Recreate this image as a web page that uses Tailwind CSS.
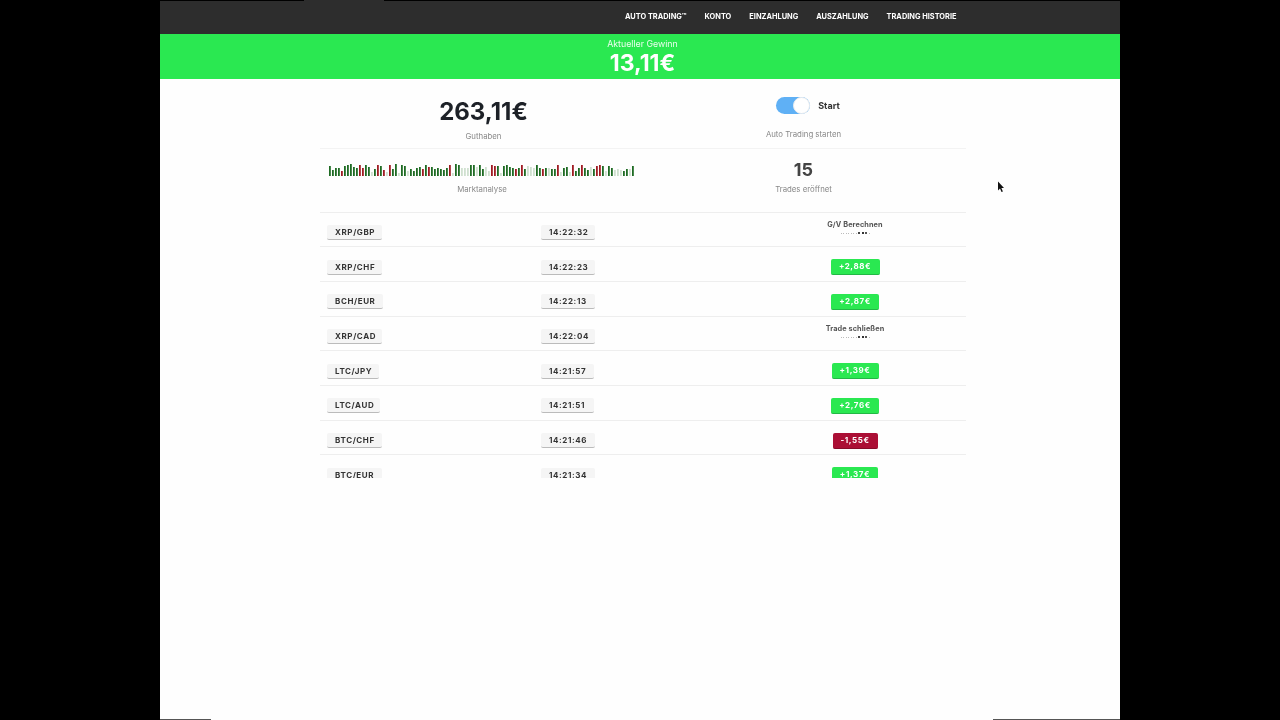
<!DOCTYPE html>
<html lang="en">
<head>
  <meta charset="UTF-8" />
  <title>Auto Trading</title>
  <script src="https://cdn.jsdelivr.net/npm/@tailwindcss/browser@4"></script>
</head>
<body class="bg-black h-[720px] overflow-hidden font-['Inter',sans-serif]">
  <div class="relative mx-auto w-[960px] h-[720px] bg-[#fefefe] overflow-hidden blur-[0.45px]">
    <!-- Edge strips from the screen recording -->
    <div class="absolute top-0 left-0 w-[144px] h-px bg-black"></div>
    <div class="absolute top-0 left-[224px] right-0 h-px bg-black"></div>
    <div class="absolute bottom-0 left-0 w-[51px] h-px bg-[#555]"></div>
    <div class="absolute bottom-0 left-[833px] right-0 h-px bg-[#555]"></div>

    <!-- Nav -->
    <nav class="h-[34px] bg-[#2d2d2d] flex items-center pl-[465px] pb-px gap-[18px] text-[7.4px] leading-[12px] font-bold text-white">
      <a>AUTO TRADING™</a>
      <a>KONTO</a>
      <a>EINZAHLUNG</a>
      <a>AUSZAHLUNG</a>
      <a>TRADING HISTORIE</a>
    </nav>

    <!-- Current profit -->
    <div class="h-[45px] bg-[#2ae851] flex flex-col items-center pl-[5px] pt-[4px] text-white">
      <div class="text-[8.8px] leading-[12px] text-white/90">Aktueller Gewinn</div>
      <div class="text-[23px] leading-[26px] font-bold">13,11€</div>
    </div>

    <div class="w-[646px] ml-[160px]">
      <!-- Stats row 1 -->
      <div class="grid grid-cols-[321px_325px] h-[70px] border-b border-[#f3f3f3]">
        <div class="flex flex-col items-center pl-[6px] pt-[19px]">
          <div class="text-[24px] leading-[28px] font-bold text-[#1d2127]">263,11€</div>
          <div class="mt-1 text-[7.8px] leading-[12px] text-[#888]">Guthaben</div>
        </div>
        <div class="flex flex-col items-center pt-[18px]">
          <div class="flex items-center gap-[8px] pl-[9px]">
            <div class="w-[34px] h-[17px] rounded-full bg-[#5fb0f5] flex justify-end">
              <div class="w-[17px] h-[17px] rounded-full bg-white border border-[#eeeeee]"></div>
            </div>
            <span class="text-[9px] leading-[12px] font-bold text-[#333]">Start</span>
          </div>
          <div class="mt-[14px] text-[7.8px] leading-[12px] text-[#888]">Auto Trading starten</div>
        </div>
      </div>

      <!-- Stats row 2 -->
      <div class="grid grid-cols-[321px_325px] h-[64px] border-b border-[#eeeeee]">
        <div class="flex flex-col items-center pl-[3px] pt-[15px]">
          <svg id="bars" width="306" height="13" class="block"></svg>
          <div class="mt-[6px] text-[7.8px] leading-[12px] text-[#888]">Marktanalyse</div>
        </div>
        <div class="flex flex-col items-center pt-[11px]">
          <div class="text-[18px] leading-[20px] font-bold text-[#444]">15</div>
          <div class="mt-[3px] text-[7.8px] leading-[12px] text-[#888]">Trades eröffnet</div>
        </div>
      </div>

      <!-- Trades -->
      <div class="h-[265px] overflow-hidden text-[8px] font-bold tracking-[0.6px] text-[#333]">
        <div class="grid grid-cols-[214px_214px_214px] items-center h-[34.3px] border-b border-[#eeeeee] pt-[6px]">
          <div><span class="inline-block ml-[7px] w-[55px] h-[15px] leading-[14px] pl-2 bg-[#f5f5f5] border-b border-[#bbb] rounded-[2px]">XRP/GBP</span></div>
          <div><span class="inline-block ml-[7px] w-[54px] h-[15px] leading-[14px] pl-2 bg-[#f5f5f5] border-b border-[#bbb] rounded-[2px]">14:22:32</span></div>
          <div class="flex flex-col items-center text-[7.3px] leading-[10px] tracking-[0.1px] text-[#555] -mt-[11px]">
            <span>G/V Berechnen</span>
            <div class="mt-[2px] flex items-center gap-[1.5px]">
              <i class="w-px h-px bg-[#bbb]"></i><i class="w-px h-px bg-[#bbb]"></i><i class="w-px h-px bg-[#bbb]"></i><i class="w-px h-px bg-[#bbb]"></i><i class="w-px h-px bg-[#bbb]"></i><i class="w-px h-px bg-[#bbb]"></i><i class="w-px h-px bg-[#bbb]"></i><i class="w-[2px] h-[2px] bg-[#444]"></i><i class="w-[2px] h-[2px] bg-[#333]"></i><i class="w-[2px] h-[2px] bg-[#555]"></i><i class="w-px h-px bg-[#bbb]"></i>
            </div>
          </div>
        </div>
        <div class="grid grid-cols-[214px_214px_214px] items-center h-[34.7px] border-b border-[#eeeeee] pt-[6px]">
          <div><span class="inline-block ml-[7px] w-[55px] h-[15px] leading-[14px] pl-2 bg-[#f5f5f5] border-b border-[#bbb] rounded-[2px]">XRP/CHF</span></div>
          <div><span class="inline-block ml-[7px] w-[54px] h-[15px] leading-[14px] pl-2 bg-[#f5f5f5] border-b border-[#bbb] rounded-[2px]">14:22:23</span></div>
          <div class="text-center"><span class="inline-block w-[49px] h-[16px] leading-[15px] bg-[#2ae851] border-b border-[#22b845] rounded-[2px] text-white text-center">+2,88€</span></div>
        </div>
        <div class="grid grid-cols-[214px_214px_214px] items-center h-[34.7px] border-b border-[#eeeeee] pt-[6px]">
          <div><span class="inline-block ml-[7px] w-[56px] h-[15px] leading-[14px] pl-2 bg-[#f5f5f5] border-b border-[#bbb] rounded-[2px]">BCH/EUR</span></div>
          <div><span class="inline-block ml-[7px] w-[54px] h-[15px] leading-[14px] pl-2 bg-[#f5f5f5] border-b border-[#bbb] rounded-[2px]">14:22:13</span></div>
          <div class="text-center"><span class="inline-block w-[48px] h-[16px] leading-[15px] bg-[#2ae851] border-b border-[#22b845] rounded-[2px] text-white text-center">+2,87€</span></div>
        </div>
        <div class="grid grid-cols-[214px_214px_214px] items-center h-[34.7px] border-b border-[#eeeeee] pt-[6px]">
          <div><span class="inline-block ml-[7px] w-[55px] h-[15px] leading-[14px] pl-2 bg-[#f5f5f5] border-b border-[#bbb] rounded-[2px]">XRP/CAD</span></div>
          <div><span class="inline-block ml-[7px] w-[54px] h-[15px] leading-[14px] pl-2 bg-[#f5f5f5] border-b border-[#bbb] rounded-[2px]">14:22:04</span></div>
          <div class="flex flex-col items-center text-[7.3px] leading-[10px] tracking-[0.1px] text-[#555] -mt-[11px]">
            <span>Trade schließen</span>
            <div class="mt-[2px] flex items-center gap-[1.5px]">
              <i class="w-px h-px bg-[#bbb]"></i><i class="w-px h-px bg-[#bbb]"></i><i class="w-px h-px bg-[#bbb]"></i><i class="w-px h-px bg-[#bbb]"></i><i class="w-px h-px bg-[#bbb]"></i><i class="w-px h-px bg-[#bbb]"></i><i class="w-px h-px bg-[#bbb]"></i><i class="w-[2px] h-[2px] bg-[#444]"></i><i class="w-[2px] h-[2px] bg-[#333]"></i><i class="w-[2px] h-[2px] bg-[#555]"></i><i class="w-px h-px bg-[#bbb]"></i>
            </div>
          </div>
        </div>
        <div class="grid grid-cols-[214px_214px_214px] items-center h-[34.7px] border-b border-[#eeeeee] pt-[6px]">
          <div><span class="inline-block ml-[7px] w-[52px] h-[15px] leading-[14px] pl-2 bg-[#f5f5f5] border-b border-[#bbb] rounded-[2px]">LTC/JPY</span></div>
          <div><span class="inline-block ml-[7px] w-[53px] h-[15px] leading-[14px] pl-2 bg-[#f5f5f5] border-b border-[#bbb] rounded-[2px]">14:21:57</span></div>
          <div class="text-center"><span class="inline-block w-[47px] h-[16px] leading-[15px] bg-[#2ae851] border-b border-[#22b845] rounded-[2px] text-white text-center">+1,39€</span></div>
        </div>
        <div class="grid grid-cols-[214px_214px_214px] items-center h-[34.7px] border-b border-[#eeeeee] pt-[6px]">
          <div><span class="inline-block ml-[7px] w-[53px] h-[15px] leading-[14px] pl-2 bg-[#f5f5f5] border-b border-[#bbb] rounded-[2px]">LTC/AUD</span></div>
          <div><span class="inline-block ml-[7px] w-[53px] h-[15px] leading-[14px] pl-2 bg-[#f5f5f5] border-b border-[#bbb] rounded-[2px]">14:21:51</span></div>
          <div class="text-center"><span class="inline-block w-[48px] h-[16px] leading-[15px] bg-[#2ae851] border-b border-[#22b845] rounded-[2px] text-white text-center">+2,76€</span></div>
        </div>
        <div class="grid grid-cols-[214px_214px_214px] items-center h-[34.7px] border-b border-[#eeeeee] pt-[6px]">
          <div><span class="inline-block ml-[7px] w-[55px] h-[15px] leading-[14px] pl-2 bg-[#f5f5f5] border-b border-[#bbb] rounded-[2px]">BTC/CHF</span></div>
          <div><span class="inline-block ml-[7px] w-[54px] h-[15px] leading-[14px] pl-2 bg-[#f5f5f5] border-b border-[#bbb] rounded-[2px]">14:21:46</span></div>
          <div class="text-center"><span class="inline-block w-[45px] h-[16px] leading-[15px] bg-[#ab0f35] border-b border-[#860b29] rounded-[2px] text-white text-center">-1,55€</span></div>
        </div>
        <div class="grid grid-cols-[214px_214px_214px] items-center h-[34.7px] border-b border-[#eeeeee] pt-[6px]">
          <div><span class="inline-block ml-[7px] w-[55px] h-[15px] leading-[14px] pl-2 bg-[#f5f5f5] border-b border-[#bbb] rounded-[2px]">BTC/EUR</span></div>
          <div><span class="inline-block ml-[7px] w-[54px] h-[15px] leading-[14px] pl-2 bg-[#f5f5f5] border-b border-[#bbb] rounded-[2px]">14:21:34</span></div>
          <div class="text-center"><span class="inline-block w-[46px] h-[16px] leading-[15px] bg-[#2ae851] border-b border-[#22b845] rounded-[2px] text-white text-center">+1,37€</span></div>
        </div>
      </div>
    </div>

    <!-- Mouse cursor -->
    <svg class="absolute left-[837px] top-[181px]" width="8" height="12" viewBox="0 0 8 12">
      <path d="M1 0.5v9l2-2 1.5 3.5 1.4-.6L4.400 7H7z" fill="#111"/>
    </svg>
  </div>

  <script>
    // Market analysis bars: colour + height
    const bars = 'g10 g6 g8 g8 r5 g10 g11 g12 g9 g8 r11 r8 g11 g9 l4 g7 r11 g10 r6 l4 r11 g7 g12 l3 g11 g10 l5 g7 g5 g8 g9 r7 g11 r9 g9 g7 g8 g7 g6 g8 r11 l3 g12 g11 l8 l8 l8 g11 g11 l9 g11 g7 l9 l5 r11 r10 g10 l3 g10 g11 g9 g8 r7 g8 r11 g7 l10 l9 l8 g11 g8 r7 g8 l8 g7 g7 r11 l4 g8 g9 l4 r11 g5 g8 r11 g8 g6 l9 g7 r10 r11 g10 l5 g10 g8 l6 l7 l6 g5 g7 l7 g10'.split(' ');
    const colors = { g: '#1f6b24', r: '#a01c24', l: '#cfe0cf' };
    document.getElementById('bars').innerHTML = bars.map((b, i) => {
      const h = +b.slice(1);
      return `<rect x="${i * 3}" y="${12 - h}" width="1.8" height="${h}" fill="${colors[b[0]]}"/>`;
    }).join('');
  </script>
</body>
</html>
